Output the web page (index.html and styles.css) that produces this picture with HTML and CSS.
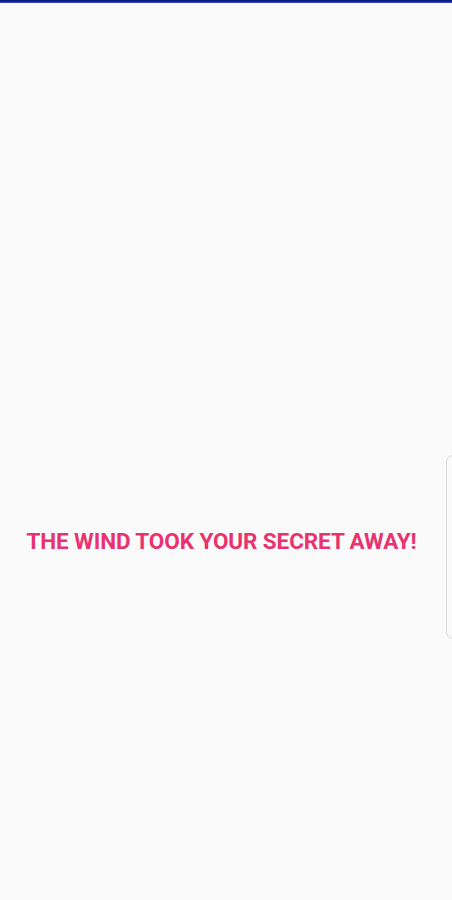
FILE: index.html
```html
<!DOCTYPE html>
<html lang="en">
<head>
    <meta charset="UTF-8">
    <meta name="viewport" content="width=device-width, initial-scale=1.0">
    <title>Secret</title>
    <link rel="stylesheet" href="styles.css">
</head>
<body>
    <div class="status-bar"></div>
    <div class="screen">
        <h1 class="message">THE WIND TOOK YOUR SECRET AWAY!</h1>
    </div>
    <div class="edge-handle"></div>
</body>
</html>
```

FILE: styles.css
```css
* {
    margin: 0;
    padding: 0;
    box-sizing: border-box;
}

body {
    width: 452px;
    height: 900px;
    background: #fafafa;
    font-family: Roboto, "Noto Sans", sans-serif;
    display: flex;
    flex-direction: column;
    overflow: hidden;
}

.status-bar {
    height: 3px;
    background: #0d1d8c;
    border-bottom: 1px solid #3b4aa8;
}

.screen {
    flex: 1;
    display: flex;
    align-items: center;
    justify-content: center;
    padding-top: 194px;
    padding-bottom: 16px;
    padding-right: 9px;
}

.message {
    font-size: 22.5px;
    font-weight: 700;
    color: #e8336f;
    letter-spacing: -0.1px;
    white-space: nowrap;
}

.edge-handle {
    position: absolute;
    left: 446px;
    top: 455px;
    width: 20px;
    height: 184px;
    border: 1.5px solid #d8d8d8;
    border-radius: 7px;
}
```
